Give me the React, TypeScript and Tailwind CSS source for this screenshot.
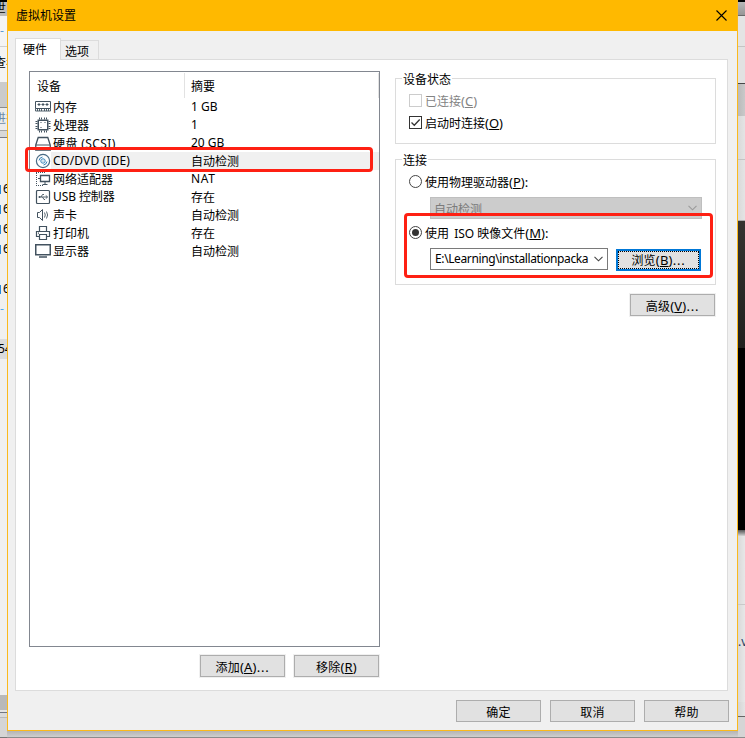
import type { ReactNode } from 'react';
import { clsx } from 'clsx';

type IconName = 'memory' | 'cpu' | 'disk' | 'cd' | 'network' | 'usb' | 'sound' | 'printer' | 'display';

const devices: Array<{ icon: IconName; name: string; summary: string; spacing?: string; selected?: boolean }> = [
  { icon: 'memory', name: '内存', summary: '1 GB' },
  { icon: 'cpu', name: '处理器', summary: '1' },
  { icon: 'disk', name: '硬盘 (SCSI)', summary: '20 GB', spacing: 'tracking-[0.4px]' },
  { icon: 'cd', name: 'CD/DVD (IDE)', summary: '自动检测', spacing: 'tracking-[0.15px]', selected: true },
  { icon: 'network', name: '网络适配器', summary: 'NAT' },
  { icon: 'usb', name: 'USB 控制器', summary: '存在', spacing: 'tracking-[-0.1px]' },
  { icon: 'sound', name: '声卡', summary: '自动检测' },
  { icon: 'printer', name: '打印机', summary: '存在' },
  { icon: 'display', name: '显示器', summary: '自动检测' },
];

// Slices of the window that shows on either side of the dialog, top to bottom.
const leftEdge = [
  { size: 'h-[2px]', look: 'bg-black' },
  { size: 'h-[14px]', look: 'bg-[#bdbdbd]', text: '世' },
  { size: 'h-[30px]', look: 'bg-[#f4f4f4] text-[#5b9bd5]', text: '-' },
  { size: 'h-[1px]', look: 'bg-[#cfcfcf]' },
  { size: 'h-[35px]', look: 'bg-[#f4f4f4] pb-1', text: '查看' },
  { size: 'h-[25px]', look: 'bg-[#cbcbcb]' },
  { size: 'h-[1px]', look: 'bg-[#8b8b8b]' },
  { size: 'h-[22px]', look: 'bg-[#ececec] text-[#6d8ba8]', text: '进行' },
  { size: 'h-[1px]', look: 'bg-[#a5a5a5]' },
  { size: 'h-[6px]', look: 'bg-[#d8d8d8]' },
  { size: 'h-[1px]', look: 'bg-[#777985]' },
  { size: 'h-[41px]', look: 'bg-[#f0f0f0]' },
  { size: 'h-[20px]', look: 'bg-[#f0f0f0]', text: '6', file: true },
  { size: 'h-[20px]', look: 'bg-[#f0f0f0]', text: '6', file: true },
  { size: 'h-[20px]', look: 'bg-[#f0f0f0]', text: '6', file: true },
  { size: 'h-[20px]', look: 'bg-[#f0f0f0]', text: '6', file: true },
  { size: 'h-[20px]', look: 'bg-[#f0f0f0]' },
  { size: 'h-[20px]', look: 'bg-[#f0f0f0]', text: '6', file: true },
  { size: 'h-[20px]', look: 'bg-[#f0f0f0] text-[#4dabed]', text: '- 7' },
  { size: 'h-[20px]', look: 'bg-[#f0f0f0]' },
  { size: 'h-[20px]', look: 'bg-[#dcdcdc]', text: '54' },
  { size: 'h-[336px]', look: 'bg-[#f0f0f0]' },
  { size: 'h-[15px]', look: 'bg-[#b9b9b9]' },
  { size: 'h-[2px]', look: 'bg-[#e4e4e4]' },
  { size: 'h-[1px]', look: 'bg-[#707580]' },
  { size: 'h-[4px]', look: 'bg-[#dadada]' },
  { size: 'h-[1px]', look: 'bg-[#b9b9b9]' },
  { size: 'h-[19px]', look: 'bg-[#d5d5d5]' },
  { size: 'h-[1px]', look: 'bg-[#777777]' },
];

const rightEdge = [
  { size: 'h-[2px]', look: 'bg-black' },
  { size: 'h-[13px]', look: 'bg-linear-to-b from-[#b8b8b8] to-[#969696]' },
  { size: 'h-[1px]', look: 'bg-[#686868]' },
  { size: 'h-[30px]', look: 'bg-[#e4e4e4]' },
  { size: 'h-[1px]', look: 'bg-[#c4c4c4]' },
  { size: 'h-[36px]', look: 'bg-[#e2e2e2]' },
  { size: 'h-[1px]', look: 'bg-[#484848]' },
  { size: 'h-[32px]', look: 'bg-linear-to-r from-[#bababa] to-[#c9c9c9]' },
  { size: 'h-[43px]', look: 'bg-linear-to-r from-[#d9d9d9] to-[#e4e4e4]' },
  { size: 'h-[1px]', look: 'bg-[#c3c3c3]' },
  { size: 'h-[60px]', look: 'bg-linear-to-r from-[#d9d9d9] to-[#e4e4e4]' },
  { size: 'h-[1px]', look: 'bg-[#aaaaaa]' },
  { size: 'h-[127px]', look: 'bg-linear-to-b from-[#353430] to-[#20201e]' },
  { size: 'h-[182px]', look: 'bg-black' },
  { size: 'h-[6px]', look: 'bg-linear-to-b from-[#555555] to-[#d5d5d5]' },
  { size: 'h-[68px]', look: 'bg-linear-to-r from-[#d9d9d9] to-[#e7e7e7]' },
  { size: 'h-[1px]', look: 'bg-[#c9c9c9]' },
  { size: 'h-[27px]', look: 'bg-linear-to-r from-[#d9d9d9] to-[#e7e7e7]' },
  { size: 'h-[20px]', look: 'bg-linear-to-r from-[#d9d9d9] to-[#e7e7e7] text-[#1c3d66]', text: '.v' },
  { size: 'h-[50px]', look: 'bg-linear-to-r from-[#d9d9d9] to-[#e7e7e7]' },
  { size: 'h-[14px]', look: 'bg-linear-to-r from-[#d4d4d4] to-[#e4e4e4]' },
  { size: 'h-[1px]', look: 'bg-[#666666]' },
  { size: 'h-[20px]', look: 'bg-[#d5d5d5]' },
  { size: 'h-[1px]', look: 'bg-[#8c8c8c]' },
];

function WindowEdge({ slices }: { slices: Array<{ size: string; look: string; text?: string; file?: boolean }> }) {
  return (
    <div className="flex w-[7px] shrink-0 flex-col overflow-hidden">
      {slices.map((slice, index) => (
        <div
          key={index}
          className={clsx('flex shrink-0 items-center overflow-hidden text-xs leading-none whitespace-nowrap', slice.size, slice.look)}
        >
          {slice.file ? <span className="mr-[2px] h-[9px] w-[1px] shrink-0 bg-[#2686d8]" /> : null}
          {slice.text ? (
            <span className={clsx('shrink-0', /^[世查进]/.test(slice.text) && '-ml-[6px]', slice.text === '54' && '-ml-[2px]')}>
              {slice.text}
            </span>
          ) : null}
        </div>
      ))}
    </div>
  );
}

const iconShapes: Record<IconName, ReactNode> = {
  memory: (
    <>
      <path d="M.5 2.5h15v7H.5z" />
      <path d="M3 5h2v1H3zM7 5h2v1H7zM11 5h2v1h-2z" fill="#42525f" />
      <path d="M.5 9.5v2.5h15V9.5M2.5 10v2M4.5 10v2M6.5 10v2M9.5 10v2M11.5 10v2M13.5 10v2" strokeWidth=".9" />
    </>
  ),
  cpu: (
    <>
      <path d="M3.25 3.25h9.5v9.5h-9.5z" strokeWidth="1.5" />
      <path d="M4.5.5v2M6.5.5v2M9.5.5v2M11.5.5v2M4.5 13.5v2M6.5 13.5v2M9.5 13.5v2M11.5 13.5v2M.5 4.5h2M.5 6.5h2M.5 9.5h2M.5 11.5h2M13.5 4.5h2M13.5 6.5h2M13.5 9.5h2M13.5 11.5h2" />
      <path d="M5.5 5.5h1M9.5 5.5h1M5.5 10.5h1" />
    </>
  ),
  disk: (
    <>
      <path d="M.75 10 3.2 2.5h9.6l2.45 7.5v5H.75z" strokeWidth="1.3" />
      <path d="M1 10h14M10.5 12.5h3" />
    </>
  ),
  cd: (
    <>
      <circle cx="8" cy="8" r="6.6" stroke="#4a6b85" strokeWidth="1.2" />
      <circle cx="8" cy="8" r="2.2" stroke="#3582b8" />
      <path d="M4 7.5A4.2 4.2 0 0 1 7.5 4M12 8.5A4.2 4.2 0 0 1 8.5 12" stroke="#3582b8" />
      <circle cx="8" cy="8" r=".6" fill="#3582b8" stroke="none" />
    </>
  ),
  network: (
    <>
      <path d="M5.5 4.5h9v6h-9z" strokeWidth="1.3" />
      <path d="M10 11v2.5M7.5 13.5h5M3 7.5h3" />
      <path d="M1 1.5h9M1.5 2v12M1 14.5h7" strokeDasharray="1 1" />
    </>
  ),
  usb: (
    <>
      <rect x="1.5" y="1.5" width="13" height="13" rx="1" strokeWidth="1.2" />
      <path d="M4 8h8M10.8 6.5 12.7 8l-1.9 1.5M6 8l1.5-2.5H9M7.5 8 9 10.5h1" strokeWidth=".9" />
      <circle cx="4.5" cy="8" r="1" fill="#42525f" stroke="none" />
    </>
  ),
  sound: (
    <>
      <path d="M2.5 5.5h2l3-3v11l-3-3h-2z" />
      <path d="M9.5 5.5q1.5 2.5 0 5M11.5 4.5q2.2 3.5 0 7" strokeWidth=".9" />
    </>
  ),
  printer: (
    <>
      <path d="M4.5 6V1.5h7V6M4.5 11.5h-3v-5h13v5h-3" strokeWidth="1.2" />
      <path d="M4.5 9.5h7v5h-7zM3 8.2h1" strokeWidth="1.2" />
    </>
  ),
  display: (
    <>
      <path d="M.75 1.75h14.5v10H.75z" strokeWidth="1.5" />
      <path d="M4 14h8" strokeWidth="1.5" />
      <path d="M6 12.5h4" stroke="#aab2b8" />
    </>
  ),
};

function DeviceIcon({ name }: { name: IconName }) {
  return (
    <svg className="h-4 w-4 shrink-0" viewBox="0 0 16 16" fill="none" stroke="#42525f" strokeWidth="1">
      {iconShapes[name]}
    </svg>
  );
}

function Hotkey({ letter, suffix }: { letter: string; suffix?: string }) {
  return (
    <span className="text-[13px]">
      (<span className="underline decoration-1 underline-offset-[1px]">{letter}</span>)
      {suffix ? <span className={clsx(suffix === '...' && 'tracking-[0.8px]')}>{suffix}</span> : null}
    </span>
  );
}

function Button({ children, focused, halo }: { children: ReactNode; focused?: boolean; halo?: boolean }) {
  return (
    <button
      type="button"
      className={clsx(
        'h-[22px] w-[85px] shrink-0 bg-[#e1e1e1] leading-none',
        focused ? 'border-2 border-[#0078d7]' : 'border border-[#adadad]',
        halo && 'shadow-[0_0_0_1px_#f0f0f0]',
      )}
    >
      <span
        className={clsx(
          'flex h-full w-full items-center justify-center',
          focused ? 'border border-dotted border-black pt-[1px]' : 'pt-[3px]',
        )}
      >
        <span className="tracking-[0.2px] whitespace-nowrap">{children}</span>
      </span>
    </button>
  );
}

function Chevron({ color }: { color: string }) {
  return (
    <svg className="h-[6px] w-[9px] shrink-0" viewBox="0 0 9 6" fill="none" stroke={color} strokeWidth="1.1">
      <path d="m.5.8 4 4 4-4" />
    </svg>
  );
}

function Radio({ checked }: { checked?: boolean }) {
  return (
    <span className="flex size-[13px] shrink-0 items-center justify-center rounded-full border border-[#444444] bg-white">
      {checked ? <span className="size-[7px] rounded-full bg-[#333333]" /> : null}
    </span>
  );
}

function Checkbox({ checked, disabled }: { checked?: boolean; disabled?: boolean }) {
  return (
    <span className={clsx('flex size-[13px] shrink-0 border', disabled ? 'border-[#cccccc]' : 'border-[#333333]')}>
      {checked ? (
        <svg className="size-[11px]" viewBox="0 0 11 11" fill="none" stroke="#333333" strokeWidth="1.3">
          <path d="m1.5 5.5 2.8 2.8 5.4-5.8" />
        </svg>
      ) : null}
    </span>
  );
}

function Option({ control, className, children }: { control: ReactNode; className: string; children: ReactNode }) {
  return (
    <div className={clsx('ml-[13px] flex h-[15px] items-center gap-[3px]', className)}>
      {control}
      <span className="pt-[2px] whitespace-pre">{children}</span>
    </div>
  );
}

function Group({ title, className, children }: { title: string; className: string; children: ReactNode }) {
  return (
    <section className={clsx('w-[321px] border border-[#dcdcdc]', className)}>
      <h2 className="-mt-[8px] ml-[6px] h-[16px] w-fit bg-white px-[1px] leading-[17px]">{title}</h2>
      {children}
    </section>
  );
}

function DeviceList() {
  return (
    <div className="h-[576px] w-[351px] border border-[#828790] bg-white">
      <div className="flex h-[26px] pt-[1px] leading-[27px]">
        <div className="h-[25px] w-[155px] border-r border-[#e2e2e2] pl-[7px]">设备</div>
        <div className="h-[25px] flex-1 border-r border-[#e2e2e2] pl-[6px]">摘要</div>
      </div>
      {devices.map((device) => (
        <div key={device.name} className="flex h-[18px] items-center pl-[5px]">
          <DeviceIcon name={device.icon} />
          <div className={clsx('flex h-[18px] flex-1 pl-[2px]', device.selected && 'bg-[#f0f0f0]')}>
            <span className={clsx('w-[138px]', device.spacing, /^[A-Z]/.test(device.name) ? 'leading-[18px]' : 'leading-[20px]')}>
              {device.name}
            </span>
            <span
              className={clsx(
                /^[A-Z0-9]/.test(device.summary) ? 'leading-[18px]' : 'leading-[20px]',
                device.summary === 'NAT' && 'tracking-[0.7px]',
              )}
            >
              {device.summary}
            </span>
          </div>
        </div>
      ))}
    </div>
  );
}

function HardwarePanel() {
  return (
    <div className="flex h-[632px] w-[713px] border border-[#dcdcdc] bg-white pt-[11px] pl-[13px]">
      <div className="w-[351px]">
        <DeviceList />
        <div className="mt-[8px] flex justify-end gap-[9px] pr-px">
          <Button halo>
            添加
            <Hotkey letter="A" suffix="..." />
          </Button>
          <Button halo>
            移除
            <Hotkey letter="R" />
          </Button>
        </div>
      </div>

      <div className="ml-[15px] w-[321px] pt-[7px]">
        <Group title="设备状态" className="h-[66px]">
          <Option control={<Checkbox disabled />} className="mt-[6px] text-[#838383]">
            已连接
            <Hotkey letter="C" />
          </Option>
          <Option control={<Checkbox checked />} className="mt-[7px]">
            启动时连接
            <Hotkey letter="O" />
          </Option>
        </Group>

        <Group title="连接" className="mt-[15px] h-[126px]">
          <Option control={<Radio />} className="mt-[6px]">
            使用物理驱动器
            <Hotkey letter="P" suffix=":" />
          </Option>
          <div className="mt-[8px] ml-[34px] flex h-[22px] w-[272px] items-center justify-between border border-[#bfbfbf] bg-[#cccccc] pr-[4px] pl-[3px] text-[#7b7b7b]">
            <span className="pt-[3px]">自动检测</span>
            <Chevron color="#9b9b9b" />
          </div>
          <Option control={<Radio checked />} className="mt-[6px]">
            使用 <span className="ml-[2px]">ISO</span> 映像文件
            <Hotkey letter="M" suffix=":" />
          </Option>
          <div className="mt-[8px] ml-[34px] flex gap-[8px]">
            <div className="flex h-[22px] w-[178px] items-center justify-between border border-[#7a7a7a] bg-white pr-[4px] pl-[4px]">
              <span className="w-[155px] overflow-hidden tracking-[-0.38px] whitespace-nowrap">E:\Learning\installationpacka</span>
              <Chevron color="#444444" />
            </div>
            <div className="mt-px -mb-px">
              <Button focused>
                浏览
                <Hotkey letter="B" suffix="..." />
              </Button>
            </div>
          </div>
        </Group>

        <div className="mt-[9px] flex justify-end pr-px">
          <Button halo>
            高级
            <Hotkey letter="V" suffix="..." />
          </Button>
        </div>
      </div>
    </div>
  );
}

export default function App() {
  return (
    <main className="relative flex h-[738px] w-[745px] overflow-hidden bg-[#d5d5d5] font-['Noto_Sans','Noto_Sans_CJK_SC',sans-serif] text-[12px] text-black">
      <WindowEdge slices={leftEdge} />

      <div className="flex w-[731px] shrink-0 flex-col">
        <div className="h-[731px] border-x border-b border-[#fbb91c] bg-[#f0f0f0]">
          <header className="flex h-[31px] items-center justify-between bg-[#ffb900] pr-[10px] pl-[8px]">
            <h1>虚拟机设置</h1>
            <svg className="size-[11px]" viewBox="0 0 11 11" stroke="black" strokeWidth="1.1">
              <path d="m.5.5 10 10M10.5.5l-10 10" />
            </svg>
          </header>

          <div className="pt-[7px] pl-[7px]">
            <nav className="-mb-px flex h-[22px] items-end leading-none">
              <button type="button" className="h-[22px] w-[46px] border border-b-0 border-[#dcdcdc] bg-white pr-[6px]">
                硬件
              </button>
              <button type="button" className="mb-px h-[19px] w-[38px] border border-b-0 border-l-0 border-[#dcdcdc] bg-[#f0f0f0] pt-[3px] pr-[5px]">
                选项
              </button>
            </nav>
            <HardwarePanel />
          </div>

          <footer className="mt-[9px] flex justify-end gap-[9px] pr-[8px]">
            <Button>确定</Button>
            <Button>取消</Button>
            <Button>帮助</Button>
          </footer>
        </div>
        <div className="h-[6px] bg-linear-to-b from-[#b4b4b4] to-[#cfcfcf]" />
        <div className="h-[1px] bg-[#8c8c8c]" />
      </div>

      <WindowEdge slices={rightEdge} />

      {/* Red highlight frames over the selected device and the ISO picker */}
      <div className="absolute top-[147px] left-[25px] h-[25px] w-[348px] rounded-[4px] border-3 border-[#fe2013]" />
      <div className="absolute top-[213px] left-[404px] h-[65px] w-[309px] rounded-[4px] border-3 border-[#fe2013]" />
    </main>
  );
}
